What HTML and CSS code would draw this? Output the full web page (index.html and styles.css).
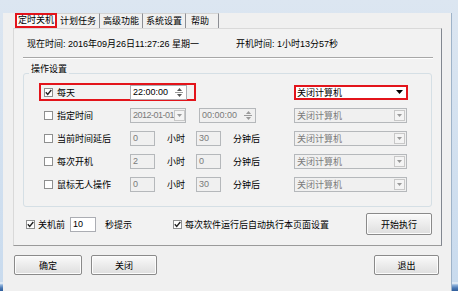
FILE: index.html
```html
<!DOCTYPE html>
<html lang="zh-CN">
  <head>
    <meta charset="UTF-8" />
    <title>定时关机</title>
    <link rel="stylesheet" href="styles.css">
  </head>
  <body>
    <div class="window">
      <div class="client">
        <div class="tabs">
          <span class="tab active">定时关机</span>
          <span class="tab">计划任务</span>
          <span class="tab">高级功能</span>
          <span class="tab">系统设置</span>
          <span class="tab last">帮助</span>
        </div>

        <div class="panel">
          <div class="info">
            <span class="now">现在时间: 2016年09月26日11:27:26 星期一</span>
            <span>开机时间: 1小时13分57秒</span>
          </div>
          <div class="sep"></div>

          <fieldset class="group">
            <legend>操作设置</legend>
            <div class="rows">
              <div class="row">
                <div class="opt hl">
                  <span class="cb"><svg width="7" height="7" viewBox="0 0 7 7"><polyline points="0.8,3.3 2.7,5.4 6.3,1" fill="none" stroke="#222" stroke-width="1.4"/></svg></span>
                  <span class="lbl">每天</span>
                  <span class="field time">22:00:00
                    <span class="spin">
                      <svg width="5" height="3" viewBox="0 0 5 3"><polygon points="0,3 5,3 2.5,0" fill="#555"/></svg>
                      <span class="bar"></span>
                      <svg width="5" height="3" viewBox="0 0 5 3"><polygon points="0,0 5,0 2.5,3" fill="#555"/></svg>
                    </span>
                  </span>
                </div>
                <div class="combo hl">关闭计算机
                  <svg class="tri" width="7" height="4" viewBox="0 0 7 4"><polygon points="0,0 7,0 3.5,4" fill="#000"/></svg>
                </div>
              </div>

              <div class="row">
                <div class="opt"><span class="cb"></span><span class="lbl">指定时间</span></div>
                <span class="field off date"><span class="val">2012-01-01</span>
                  <span class="dd"><svg width="5" height="3" viewBox="0 0 5 3"><polygon points="0,0 5,0 2.5,3" fill="#999"/></svg></span>
                </span>
                <span class="field off time gap13">00:00:00
                  <span class="spin">
                    <svg width="5" height="3" viewBox="0 0 5 3"><polygon points="0,3 5,3 2.5,0" fill="#999"/></svg>
                    <span class="bar"></span>
                    <svg width="5" height="3" viewBox="0 0 5 3"><polygon points="0,0 5,0 2.5,3" fill="#999"/></svg>
                  </span>
                </span>
                <div class="combo">关闭计算机
                  <span class="dd"><svg width="5" height="3" viewBox="0 0 5 3"><polygon points="0,0 5,0 2.5,3" fill="#999"/></svg></span>
                </div>
              </div>

              <div class="row">
                <div class="opt"><span class="cb"></span><span class="lbl">当前时间延后</span></div>
                <span class="field off num">0</span>
                <span class="unit">小时</span>
                <span class="field off num gap11">30</span>
                <span class="unit">分钟后</span>
                <div class="combo">关闭计算机
                  <span class="dd"><svg width="5" height="3" viewBox="0 0 5 3"><polygon points="0,0 5,0 2.5,3" fill="#999"/></svg></span>
                </div>
              </div>

              <div class="row">
                <div class="opt"><span class="cb"></span><span class="lbl">每次开机</span></div>
                <span class="field off num">2</span>
                <span class="unit">小时</span>
                <span class="field off num gap11">0</span>
                <span class="unit">分钟后</span>
                <div class="combo">关闭计算机
                  <span class="dd"><svg width="5" height="3" viewBox="0 0 5 3"><polygon points="0,0 5,0 2.5,3" fill="#999"/></svg></span>
                </div>
              </div>

              <div class="row">
                <div class="opt"><span class="cb"></span><span class="lbl">鼠标无人操作</span></div>
                <span class="field off num">0</span>
                <span class="unit">小时</span>
                <span class="field off num gap11">30</span>
                <span class="unit">分钟后</span>
                <div class="combo">关闭计算机
                  <span class="dd"><svg width="5" height="3" viewBox="0 0 5 3"><polygon points="0,0 5,0 2.5,3" fill="#999"/></svg></span>
                </div>
              </div>
            </div>
          </fieldset>

          <div class="foot">
            <span class="cb"><svg width="7" height="7" viewBox="0 0 7 7"><polyline points="0.8,3.3 2.7,5.4 6.3,1" fill="none" stroke="#222" stroke-width="1.4"/></svg></span>
            <span class="before">关机前</span>
            <span class="field sec">10</span>
            <span class="hint">秒提示</span>
            <span class="cb auto"><svg width="7" height="7" viewBox="0 0 7 7"><polyline points="0.8,3.3 2.7,5.4 6.3,1" fill="none" stroke="#222" stroke-width="1.4"/></svg></span>
            <span class="before">每次软件运行后自动执行本页面设置</span>
            <button class="btn start">开始执行</button>
          </div>
        </div>

        <div class="actions">
          <button class="btn">确定</button>
          <button class="btn close">关闭</button>
          <button class="btn exit">退出</button>
        </div>
      </div>
    </div>
  </body>
</html>
```

FILE: styles.css
```css
* {
  margin: 0;
  padding: 0;
  box-sizing: border-box;
}
body {
  width: 458px;
  height: 291px;
  overflow: hidden;
  font-family: "Liberation Sans", "Noto Sans CJK SC", sans-serif;
  font-size: 9px;
  color: #000;
}
.window {
  height: 291px;
  padding: 3px 6px 8px 3px;
  background: linear-gradient(to bottom, #dce6f1 0, #c9dbee 282px, #f3f7fb 283px, #8fb3dc 285px, #4a78b4 288px, #2f5d9a 291px);
}
.client {
  height: 280px;
  background: #f0f0f0;
  border-right: 1px solid #9eb3c9;
}

/* tabs */
.tabs {
  display: flex;
  margin: 10px 0 0 12px;
  height: 15px;
}
.tab {
  height: 15px;
  line-height: 14px;
  text-align: center;
  border-top: 1px solid #d4d4d4;
  border-right: 1px solid #8c8e94;
  width: 43px;
}
.tab.active {
  width: 42px;
  border: 2px solid #e3141b;
  background: #fafafa;
  line-height: 11px;
}
.tab.last {
  width: 33px;
  text-align: left;
  padding-left: 5px;
}

/* panel */
.panel {
  margin-left: 10px;
  width: 429px;
  border: 1px solid #8c8e94;
  border-color: #d9d9d9 #828790 #9a9a9a #d9d9d9;
  padding: 9px 9px 10px 9px;
  background: #f2f2f2;
}
.info {
  display: flex;
  line-height: 13px;
  padding-left: 4px;
}
.now {
  width: 209px;
}
.sep {
  width: 410px;
  height: 2px;
  margin-top: 6px;
  border-top: 1px solid #a8a8a8;
  border-bottom: 1px solid #fff;
}

.group {
  margin-top: 6px;
  border: 1px solid #d5dfe5;
  border-radius: 3px;
  padding: 1px 0 13px;
}
.group legend {
  margin-left: 5px;
  padding: 0 2px 8px;
  line-height: 9px;
}
.rows {
  display: flex;
  flex-direction: column;
  gap: 5px;
}
.row {
  display: flex;
  align-items: center;
  height: 18px;
}
.opt {
  display: flex;
  align-items: center;
  margin-left: 20px;
}
.opt.hl {
  margin-left: 15px;
  height: 18px;
  border: 2px solid #e3141b;
  padding: 0 7px 0 3px;
}
.cb {
  width: 9px;
  height: 9px;
  border: 1px solid #8e8f8f;
  background: #fff;
  display: flex;
  align-items: center;
  justify-content: center;
}
.lbl {
  width: 73px;
  margin-left: 4px;
}

.field {
  height: 15px;
  display: flex;
  align-items: center;
  padding-left: 2px;
  border: 1px solid #abadb3;
  background: #fff;
  line-height: 13px;
  white-space: nowrap;
  overflow: hidden;
}
.field.off {
  background: #f0f0f0;
  border-color: #b5b8bb;
  color: #7a7a7a;
}
.time {
  width: 57px;
}
.date {
  width: 56px;
}
.date .val {
  letter-spacing: -0.5px;
}
.num {
  width: 25px;
}
.gap13 {
  margin-left: 13px;
}
.gap11 {
  margin-left: 11px;
}
.unit {
  margin-left: 12px;
}
.spin {
  margin-left: auto;
  margin-right: 1px;
  width: 12px;
  height: 11px;
  display: flex;
  flex-direction: column;
  align-items: center;
  justify-content: space-between;
  padding: 1px 0;
}
.spin .bar {
  width: 8px;
  border-top: 1px solid #9a9a9a;
}
.dd {
  flex: none;
  margin-left: auto;
  margin-right: 1px;
  width: 11px;
  height: 11px;
  border: 1px solid #c8c8c8;
  background: #f4f4f4;
  display: flex;
  align-items: center;
  justify-content: center;
}

.combo {
  margin-left: auto;
  margin-right: 24px;
  width: 113px;
  height: 15px;
  display: flex;
  align-items: center;
  padding-left: 2px;
  border: 1px solid #b5b8bb;
  background: #f0f0f0;
  color: #7a7a7a;
}
.combo.hl {
  margin-right: 23px;
  width: 114px;
  border: 2px solid #e3141b;
  background: #fff;
  color: #000;
  padding-left: 1px;
}
.combo .tri {
  margin-left: auto;
  margin-right: 3px;
}

/* bottom of panel */
.foot {
  display: flex;
  align-items: center;
  height: 22px;
  margin-top: 6px;
  padding-left: 3px;
}
.before {
  margin-left: 3px;
}
.sec {
  width: 26px;
  margin-left: 5px;
}
.hint {
  margin-left: 9px;
}
.cb.auto {
  margin-left: 41px;
}

.btn {
  height: 20px;
  width: 68px;
  font: inherit;
  color: #000;
  border: 1px solid #8a8a8a;
  border-radius: 2px;
  background: linear-gradient(to bottom, #fafafa, #ececec 50%, #dedede);
  box-shadow: inset 0 0 0 1px #fcfcfc;
}
.btn.start {
  margin-left: auto;
  width: 66px;
  height: 22px;
}

.actions {
  display: flex;
  margin: 9px 12px 0 11px;
}
.actions .close {
  margin-left: 9px;
  width: 66px;
}
.actions .exit {
  margin-left: auto;
  width: 65px;
}
```
